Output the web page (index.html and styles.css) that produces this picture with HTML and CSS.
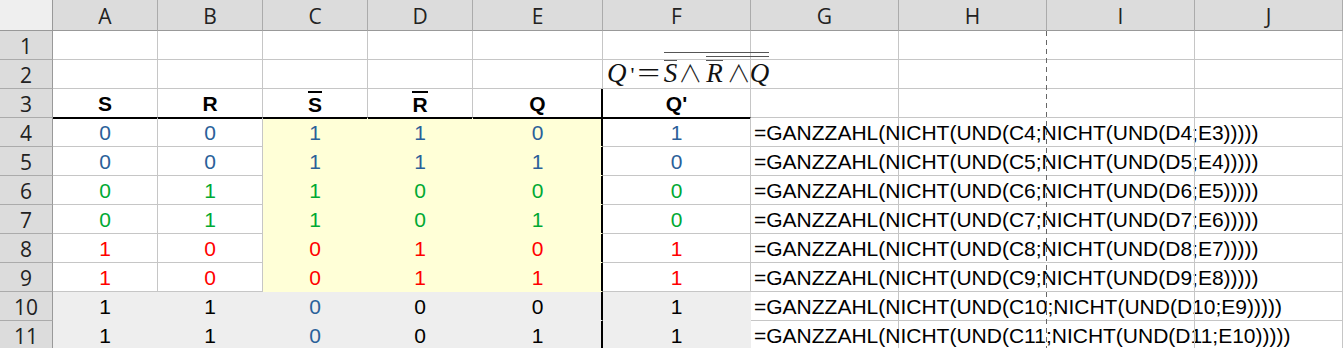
FILE: index.html
```html
<!DOCTYPE html>
<html lang="de">
<head>
<meta charset="utf-8">
<title>SR-Flipflop</title>
<link rel="stylesheet" href="styles.css">
</head>
<body>
<div class="sheet">
  <!-- header row -->
  <div class="c corner"></div>
  <div class="c ch">A</div><div class="c ch">B</div><div class="c ch">C</div><div class="c ch">D</div><div class="c ch">E</div><div class="c ch">F</div><div class="c ch">G</div><div class="c ch">H</div><div class="c ch">I</div><div class="c ch">J</div>

  <!-- row 1 -->
  <div class="c rh">1</div>
  <div class="c"></div><div class="c"></div><div class="c"></div><div class="c"></div><div class="c"></div><div class="c"></div><div class="c"></div><div class="c pbc"></div><div class="c"></div><div class="c"></div>

  <!-- row 2 -->
  <div class="c rh">2</div>
  <div class="c"></div><div class="c"></div><div class="c"></div><div class="c"></div><div class="c"></div><div class="c"></div><div class="c"></div><div class="c pbc"></div><div class="c"></div><div class="c"></div>

  <!-- row 3 -->
  <div class="c rh">3</div>
  <div class="c b t3">S</div><div class="c b t3">R</div><div class="c b t3"><span class="bar">S</span></div><div class="c b t3"><span class="bar">R</span></div><div class="c b t3 vr">Q</div><div class="c b t3">Q'</div><div class="c"></div><div class="c pbc"></div><div class="c"></div><div class="c"></div>

  <!-- row 4 -->
  <div class="c rh">4</div>
  <div class="c bl t4">0</div><div class="c bl t4">0</div><div class="c y bl t4">1</div><div class="c y bl t4">1</div><div class="c y bl vr t4v">0</div><div class="c bl t4">1</div><div class="c f">=GANZZAHL(NICHT(UND(C4;NICHT(UND(D4;E3)))))</div><div class="c pbc"></div><div class="c"></div><div class="c"></div>

  <!-- row 5 -->
  <div class="c rh">5</div>
  <div class="c bl">0</div><div class="c bl">0</div><div class="c y bl">1</div><div class="c y bl">1</div><div class="c y bl vr">1</div><div class="c bl">0</div><div class="c f">=GANZZAHL(NICHT(UND(C5;NICHT(UND(D5;E4)))))</div><div class="c pbc"></div><div class="c"></div><div class="c"></div>

  <!-- row 6 -->
  <div class="c rh">6</div>
  <div class="c gr">0</div><div class="c gr">1</div><div class="c y gr">1</div><div class="c y gr">0</div><div class="c y gr vr">0</div><div class="c gr">0</div><div class="c f">=GANZZAHL(NICHT(UND(C6;NICHT(UND(D6;E5)))))</div><div class="c pbc"></div><div class="c"></div><div class="c"></div>

  <!-- row 7 -->
  <div class="c rh">7</div>
  <div class="c gr">0</div><div class="c gr">1</div><div class="c y gr">1</div><div class="c y gr">0</div><div class="c y gr vr">1</div><div class="c gr">0</div><div class="c f">=GANZZAHL(NICHT(UND(C7;NICHT(UND(D7;E6)))))</div><div class="c pbc"></div><div class="c"></div><div class="c"></div>

  <!-- row 8 -->
  <div class="c rh">8</div>
  <div class="c rd">1</div><div class="c rd">0</div><div class="c y rd">0</div><div class="c y rd">1</div><div class="c y rd vr">0</div><div class="c rd">1</div><div class="c f">=GANZZAHL(NICHT(UND(C8;NICHT(UND(D8;E7)))))</div><div class="c pbc"></div><div class="c"></div><div class="c"></div>

  <!-- row 9 -->
  <div class="c rh">9</div>
  <div class="c rd">1</div><div class="c rd">0</div><div class="c y rd">0</div><div class="c y rd">1</div><div class="c y rd vr">1</div><div class="c rd">1</div><div class="c f">=GANZZAHL(NICHT(UND(C9;NICHT(UND(D9;E8)))))</div><div class="c pbc"></div><div class="c"></div><div class="c"></div>

  <!-- row 10 -->
  <div class="c rh">10</div>
  <div class="c g">1</div><div class="c g">1</div><div class="c g bl">0</div><div class="c g">0</div><div class="c g vr">0</div><div class="c g">1</div><div class="c f">=GANZZAHL(NICHT(UND(C10;NICHT(UND(D10;E9)))))</div><div class="c pbc"></div><div class="c"></div><div class="c"></div>

  <!-- row 11 -->
  <div class="c rh">11</div>
  <div class="c g">1</div><div class="c g">1</div><div class="c g bl">0</div><div class="c g">0</div><div class="c g vr">1</div><div class="c g">1</div><div class="c f">=GANZZAHL(NICHT(UND(C11;NICHT(UND(D11;E10)))))</div><div class="c pbc"></div><div class="c"></div><div class="c"></div>

  <!-- embedded formula object (floats over cells F2/G2) -->
  <div class="eq"><span class="v">Q</span><span class="pr">'</span><span class="eqs">=</span><span class="ov o1"><span class="ov o3"><span class="v">S</span></span><span class="op op1">∧</span><span class="ov o2"><span class="ov o3"><span class="v">R</span></span><span class="op op2">∧</span><span class="v">Q</span></span></span></div>

  <!-- page break marker -->
  <div class="pb"></div>
</div>
</body>
</html>
```

FILE: styles.css
```css
html, body {
  margin: 0;
  padding: 0;
  background: #ffffff;
  overflow: hidden;
}

.sheet {
  position: relative;
  display: grid;
  grid-template-columns: 53px repeat(4, 105px) 130px repeat(5, 148px);
  grid-template-rows: 31px repeat(11, 29px);
  width: 1343px;
}

.c {
  box-sizing: border-box;
  min-width: 0;
  border-right: 1px solid #c6c6c6;
  border-bottom: 1px solid #c6c6c6;
  display: flex;
  align-items: flex-end;
  justify-content: center;
  font-family: "Liberation Sans", Arial, sans-serif;
  font-size: 21px;
  line-height: 26px;
  color: #000;
  white-space: nowrap;
}

.corner {
  background: #efefef;
  border-right-color: #999;
  border-bottom-color: #999;
}

.ch {
  background: #dcdcdc;
  border-right-color: #ababab;
  border-bottom-color: #999;
  font-family: "Open Sans", "Noto Sans", sans-serif;
  color: #222;
  padding-bottom: 1px;
}

.rh {
  background: #dcdcdc;
  border-right-color: #999;
  border-bottom-color: #ababab;
  font-family: "Open Sans", "Noto Sans", sans-serif;
  color: #222;
}

.b { font-weight: bold; }

.bar {
  display: inline-block;
  border-top: 2px solid #000;
  line-height: normal;
}

.bl { color: #2a6099; }
.gr { color: #00a933; }
.rd { color: #ff0000; }

.y {
  background: #ffffd7;
  border-right-color: #ffffd7;
  border-bottom-color: #ffffd7;
}

.g {
  background: #eeeeee;
  border-right-color: #eeeeee;
  border-bottom-color: #eeeeee;
}

.t3 { border-bottom-color: #000; }
.t4 { box-shadow: inset 0 1px 0 #000; }

.vr {
  border-right-color: #000;
  box-shadow: inset -1px 0 0 #000;
}
.vr.t4v {
  box-shadow: inset -1px 0 0 #000, inset 0 1px 0 #000;
}

.f {
  justify-content: flex-start;
  padding-left: 3px;
  overflow: visible;
}

.pbc { border-right-color: transparent; }

.pb {
  position: absolute;
  left: 1046px;
  top: 31px;
  bottom: 0;
  width: 1px;
  background: repeating-linear-gradient(to bottom, #666 0 5px, transparent 5px 9px);
}

/* formula object */
.eq {
  position: absolute;
  left: 607px;
  top: 52px;
  font-family: "Liberation Serif", "Times New Roman", serif;
  font-size: 27px;
  line-height: 20px;
  color: #111;
  white-space: nowrap;
}

.v { font-style: italic; }

.pr {
  display: inline-block;
  margin-left: 4px;
  font-size: 22px;
}

.eqs {
  display: inline-block;
  margin: 0 6px 0 7px;
  transform: scaleX(1.5);
}

.ov {
  display: inline-block;
  border-top: 1px solid #555;
}
.o1 { padding-top: 3px; margin-left: 1px; }
.o2 { padding-top: 3px; }
.o3 { padding-top: 2px; }

.op {
  display: inline-block;
  font-family: "Noto Sans CJK JP", "DejaVu Sans", sans-serif;
  font-weight: 300;
  font-size: 24px;
  color: #222;
}
.op1 { margin: 0 4px 0 1px; }
.op2 { margin: 0 -1px 0 4px; }
```
